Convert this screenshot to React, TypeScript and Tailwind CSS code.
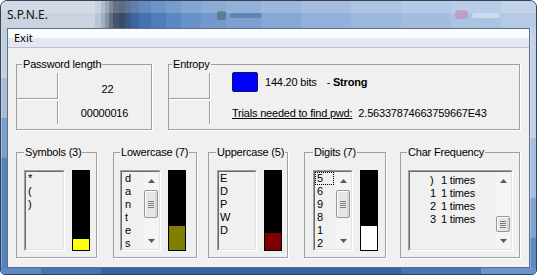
import React from "react";

function Legend({ ml, children }: { ml: string; children: React.ReactNode }) {
  return (
    <legend className={`${ml} px-[1px] text-[11px] leading-[13px] tracking-[-0.2px] whitespace-nowrap text-black`}>
      {children}
    </legend>
  );
}

function Cells() {
  return (
    <div className="w-[41px] flex flex-col shrink-0">
      <div className="mt-[2px] h-[26px] border-r border-b border-[#a0a0a0] shadow-[1px_1px_0_#fff]" />
      <div className="mt-[2px] h-[23px] border-r border-[#a0a0a0] shadow-[1px_0_0_#fff]" />
    </div>
  );
}

function ListBox({ w, children }: { w: string; children: React.ReactNode }) {
  return (
    <div className={`${w} h-[81px] shrink-0 border border-t-[#a0a0a0] border-l-[#a0a0a0] border-r-white border-b-white`}>
      <div className="h-full border border-t-[#696969] border-l-[#696969] border-r-[#e3e3e3] border-b-[#e3e3e3] bg-[#f0f0f0] overflow-hidden flex">
        {children}
      </div>
    </div>
  );
}

function Arrow({ down }: { down?: boolean }) {
  return (
    <svg width="7" height="4" viewBox="0 0 7 4">
      {down ? (
        <polygon points="0,0 7,0 3.5,4" fill="#5a5a5a" />
      ) : (
        <polygon points="0,4 7,4 3.5,0" fill="#5a5a5a" />
      )}
    </svg>
  );
}

function VScroll({ thumb }: { thumb: string }) {
  return (
    <div className="w-[17px] h-full shrink-0 flex flex-col bg-[#f4f4f4] border-l border-[#ebebeb]">
      <div className="h-[17px] flex items-center justify-center">
        <Arrow />
      </div>
      <div className="flex-1 flex flex-col">
        <div
          className={`${thumb} ml-[1px] w-[14px] rounded-[2px] border border-[#979797] bg-[#e6e6e6] shadow-[inset_1px_1px_0_#fff,inset_-2px_0_0_#d6d6d6] flex flex-col items-center justify-center gap-[1px]`}
        >
          <div className="w-[6px] h-px bg-[#7c7c7c]" />
          <div className="w-[6px] h-px bg-[#7c7c7c]" />
          <div className="w-[6px] h-px bg-[#7c7c7c]" />
          <div className="w-[6px] h-px bg-[#7c7c7c]" />
        </div>
      </div>
      <div className="h-[17px] flex items-center justify-center">
        <Arrow down />
      </div>
    </div>
  );
}

function Bar({ fill }: { fill: string }) {
  return (
    <div className="ml-[7px] w-[18px] h-[81px] bg-black p-px flex flex-col justify-end shrink-0">
      <div className={fill} />
    </div>
  );
}

function Items({ items, pl }: { items: string[]; pl: string }) {
  return (
    <div className={`flex-1 ${pl} text-[11px] leading-[13px] text-black`}>
      {items.map((s, i) => (
        <div key={i} className="h-[13px]">
          {s}
        </div>
      ))}
    </div>
  );
}

const TITLE_STEPS: [number, number, string][] = [
  [0, 94, "#c9d4e0"],
  [94, 6, "#bac6d4"],
  [100, 4, "#a3afbf"],
  [104, 4, "#8593a5"],
  [108, 4, "#636f81"],
  [112, 6, "#46536a"],
  [118, 6, "#3b4a62"],
  [124, 6, "#3b5784"],
  [130, 8, "#3d65a0"],
  [138, 12, "#4471b0"],
  [150, 15, "#4e7dbc"],
  [165, 15, "#5a88c4"],
  [180, 20, "#6892c9"],
  [200, 25, "#7399cc"],
  [225, 35, "#7c9fd0"],
  [260, 40, "#87a8d5"],
  [300, 50, "#92b0d9"],
  [350, 50, "#9bb7dc"],
  [400, 50, "#a3bde0"],
  [450, 50, "#abc3e3"],
  [500, 35, "#b5cae6"],
];

function TitleGlass() {
  return (
    <svg width="535" height="27" viewBox="0 0 535 27" className="block">
      {TITLE_STEPS.map(([x, w, c], i) => (
        <rect key={i} x={x} y="0" width={w + 0.5} height="27" fill={c} />
      ))}
      <rect x="0" y="0" width="535" height="12" fill="#ffffff" opacity="0.18" />
      <rect x="216" y="10" width="9" height="9" rx="2" fill="#3d5c50" opacity="0.45" />
      <rect x="229" y="12" width="32" height="5" rx="2.5" fill="#34527c" opacity="0.35" />
      <rect x="454" y="9" width="13" height="9" rx="3" fill="#c18aa8" opacity="0.6" />
      <rect x="471" y="12" width="28" height="5" rx="2.5" fill="#e3ebf5" opacity="0.6" />
    </svg>
  );
}

function VFrame({ steps }: { steps: [number, number, string][] }) {
  return (
    <svg width="6" height="240" viewBox="0 0 6 240" className="block shrink-0">
      {steps.map(([y, h, c], i) => (
        <rect key={i} x="0" y={y} width="6" height={h + 0.5} fill={c} />
      ))}
      <rect x="0" y="0" width="1" height="240" fill="#ffffff" opacity="0.3" />
    </svg>
  );
}

function BottomFrame() {
  const steps: [number, number, string][] = [
    [0, 40, "#5d89c3"],
    [40, 60, "#4674b3"],
    [100, 300, "#3463a3"],
    [400, 80, "#4573b3"],
    [480, 55, "#6a94cb"],
  ];
  return (
    <svg width="535" height="6" viewBox="0 0 535 6" className="block">
      {steps.map(([x, w, c], i) => (
        <rect key={i} x={x} y="0" width={w + 0.5} height="6" fill={c} />
      ))}
    </svg>
  );
}

export default function App() {
  return (
    <div className="w-[537px] h-[275px] overflow-hidden bg-white font-['Liberation_Sans',Arial,sans-serif]">
      <div className="w-[537px] h-[275px] flex flex-col rounded-t-[7px] rounded-b-[5px] border border-[#34425a] overflow-hidden bg-[#9fb7d6]">
        {/* title bar: glass drawing with the caption over it in the same grid cell */}
        <div className="h-[27px] shrink-0 grid grid-cols-1 grid-rows-1">
          <div className="col-start-1 row-start-1">
            <TitleGlass />
          </div>
          <div className="col-start-1 row-start-1 flex items-center pl-[6px] pt-[1px]">
            <span className="font-['Noto_Sans',sans-serif] text-[12px] leading-[16px] text-[#111] whitespace-nowrap">
              S.P.N.E.
            </span>
          </div>
        </div>
        {/* middle */}
        <div className="h-[240px] shrink-0 flex">
          <VFrame
            steps={[
              [0, 50, "#c3d0de"],
              [50, 40, "#a9bdd6"],
              [90, 40, "#7d9fcc"],
              [130, 110, "#5384c0"],
            ]}
          />
          <div className="w-[523px] shrink-0 border border-[#5f7088] bg-[#f0f0f0] flex flex-col">
            {/* menu */}
            <div className="h-[19px] shrink-0 flex flex-col border-b border-[#b9c0d0] bg-[#e3e8f1]">
              <div className="h-[18px] flex items-center pl-[6px] border-t-[9px] border-[#fafbfd] -mb-[9px]">
                <span className="-mt-[9px] font-['Noto_Sans',sans-serif] text-[11px] leading-[14px] text-black">Exit</span>
              </div>
            </div>
            {/* body */}
            <div className="flex flex-col text-[11px] leading-[13px] tracking-[-0.2px] text-black">
              <div className="flex mt-[10px]">
                <fieldset className="ml-[8px] w-[136px] h-[72px] border border-[#a0a0a0] shadow-[1px_1px_0_#fff]">
                  <Legend ml="ml-[5px]">Password length</Legend>
                  <div className="flex">
                    <Cells />
                    <div className="flex-1 flex flex-col">
                      <div className="mt-[12px] pl-[6px] text-center">22</div>
                      <div className="mt-[11px] text-center">00000016</div>
                    </div>
                  </div>
                </fieldset>
                <fieldset className="ml-[16px] w-[352px] h-[72px] border border-[#a0a0a0] shadow-[1px_1px_0_#fff]">
                  <Legend ml="ml-[3px]">Entropy</Legend>
                  <div className="flex">
                    <Cells />
                    <div className="flex flex-col pl-[22px]">
                      <div className="mt-[1px] h-[20px] flex items-center">
                        <div className="w-[26px] h-[20px] bg-[#0000ff] border border-[#14145a] rounded-[2px]" />
                        <span className="ml-[7px]">144.20 bits</span>
                        <span className="ml-[10px]">
                          - <b>Strong</b>
                        </span>
                      </div>
                      <div className="mt-[15px] flex">
                        <span className="underline">Trials needed to find pwd:</span>
                        <span className="ml-[6px]">2.56337874663759667E43</span>
                      </div>
                    </div>
                  </div>
                </fieldset>
              </div>

              <div className="flex mt-[16px]">
                <fieldset className="ml-[8px] w-[81px] h-[112px] border border-[#a0a0a0] shadow-[1px_1px_0_#fff]">
                  <Legend ml="ml-[7px]">Symbols (3)</Legend>
                  <div className="flex pt-[11px] pl-[7px]">
                    <ListBox w="w-[41px]">
                      <Items items={["*", "(", ")"]} pl="pl-[2px]" />
                    </ListBox>
                    <Bar fill="h-[11px] bg-[#ffff00]" />
                  </div>
                </fieldset>
                <fieldset className="ml-[16px] w-[84px] h-[112px] border border-[#a0a0a0] shadow-[1px_1px_0_#fff]">
                  <Legend ml="ml-[6px]">Lowercase (7)</Legend>
                  <div className="flex pt-[11px] pl-[6px]">
                    <ListBox w="w-[41px]">
                      <Items items={["d", "a", "n", "t", "e", "s"]} pl="pl-[3px]" />
                      <VScroll thumb="mt-[1px] h-[28px]" />
                    </ListBox>
                    <Bar fill="h-[24px] bg-[#808000]" />
                  </div>
                </fieldset>
                <fieldset className="ml-[11px] w-[80px] h-[112px] border border-[#a0a0a0] shadow-[1px_1px_0_#fff]">
                  <Legend ml="ml-[7px]">Uppercase (5)</Legend>
                  <div className="flex pt-[11px] pl-[8px]">
                    <ListBox w="w-[40px]">
                      <Items items={["E", "D", "P", "W", "D"]} pl="pl-[1px]" />
                    </ListBox>
                    <Bar fill="h-[17px] bg-[#800000]" />
                  </div>
                </fieldset>
                <fieldset className="ml-[16px] w-[82px] h-[112px] border border-[#a0a0a0] shadow-[1px_1px_0_#fff]">
                  <Legend ml="ml-[8px]">Digits (7)</Legend>
                  <div className="flex pt-[11px] pl-[8px]">
                    <ListBox w="w-[40px]">
                      <div className="flex-1 text-[11px] leading-[13px] text-black">
                        <div className="h-[13px] border border-dotted border-black leading-[11px] pl-px">5</div>
                        {["6", "9", "8", "1", "2"].map((s, i) => (
                          <div key={i} className="h-[13px] pl-[2px]">
                            {s}
                          </div>
                        ))}
                      </div>
                      <VScroll thumb="mt-[1px] h-[28px]" />
                    </ListBox>
                    <Bar fill="h-[24px] bg-white" />
                  </div>
                </fieldset>
                <fieldset className="ml-[14px] w-[120px] h-[112px] border border-[#a0a0a0] shadow-[1px_1px_0_#fff]">
                  <Legend ml="ml-[6px]">Char Frequency</Legend>
                  <div className="flex pt-[11px] pl-[7px]">
                    <ListBox w="w-[105px]">
                      <div className="flex-1 pt-[2px] pl-[20px] text-[11px] leading-[13px] text-black">
                        {[")", "1", "2", "3"].map((c, i) => (
                          <div key={i} className="h-[13px] flex">
                            <span className="w-[11px]">{c}</span>
                            <span>1 times</span>
                          </div>
                        ))}
                      </div>
                      <VScroll thumb="mt-[27px] h-[16px]" />
                    </ListBox>
                  </div>
                </fieldset>
              </div>
            </div>
          </div>
          <VFrame
            steps={[
              [0, 110, "#c2d2e6"],
              [110, 60, "#a6bfe0"],
              [170, 40, "#7fa2d0"],
              [210, 30, "#5c88c3"],
            ]}
          />
        </div>
        {/* bottom frame */}
        <BottomFrame />
      </div>
    </div>
  );
}
